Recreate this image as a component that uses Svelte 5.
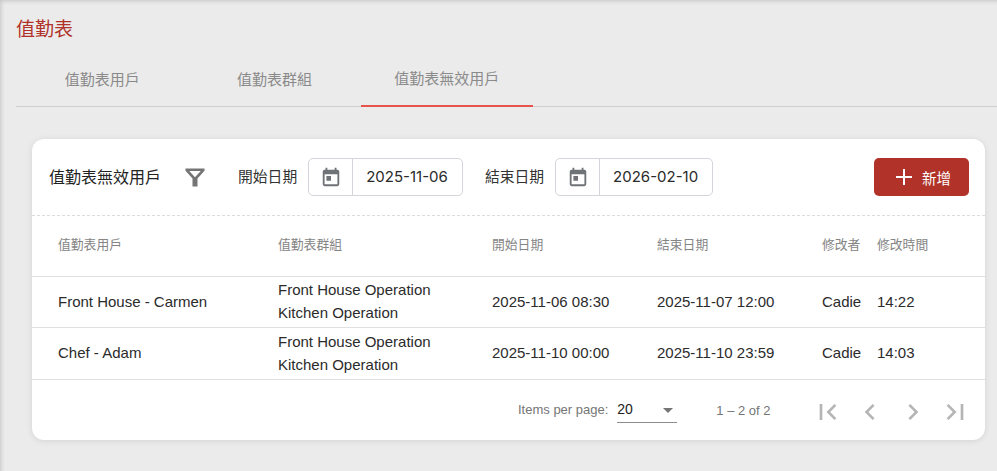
<script lang="ts">
  // Attendance sheet page: tabs plus the "invalid users" table card.
  const tabs = ['值勤表用戶', '值勤表群組', '值勤表無效用戶'];
  const activeTab = 2;

  const columns = ['值勤表用戶', '值勤表群組', '開始日期', '結束日期', '修改者', '修改時間'];
  const rows = [
    { user: 'Front House - Carmen', groups: ['Front House Operation', 'Kitchen Operation'], start: '2025-11-06 08:30', end: '2025-11-07 12:00', by: 'Cadie', time: '14:22' },
    { user: 'Chef - Adam', groups: ['Front House Operation', 'Kitchen Operation'], start: '2025-11-10 00:00', end: '2025-11-10 23:59', by: 'Cadie', time: '14:03' }
  ];

  const dates = [
    { label: '開始日期', value: '2025-11-06' },
    { label: '結束日期', value: '2026-02-10' }
  ];

  const pagers = [
    'M6.5 6v12h2V6zM19 7.4 17.6 6l-6 6 6 6 1.4-1.4L14.4 12z',
    'M15.4 7.4 14 6l-6 6 6 6 1.4-1.4L10.8 12z',
    'M8.6 7.4 10 6l6 6-6 6-1.4-1.4 4.6-4.6z',
    'M15.5 6v12h2V6zM5 7.4 6.4 6l6 6-6 6L5 16.6 9.6 12z'
  ];
</script>

<div class="page">
  <h1 class="title">值勤表</h1>

  <nav class="tabs">
    {#each tabs as tab, i}
      <div class="tab" class:active={i === activeTab}>{tab}</div>
    {/each}
  </nav>

  <section class="card">
    <header class="toolbar">
      <span class="card-title">值勤表無效用戶</span>
      <svg class="filter" viewBox="0 0 24 24" width="24" height="24">
        <path d="M2.500 3.500h19v2.300l-7 7.700v8h-5v-8l-7-7.700zM6.300 6l5.700 6.300L17.700 6z" fill-rule="evenodd" />
      </svg>
      {#each dates as date}
        <div class="date-field">
          <span class="date-label">{date.label}</span>
          <div class="date-box">
            <span class="date-icon">
              <svg viewBox="0 0 24 24" width="24" height="24">
                <path d="M19 4h-1V2h-2v2H8V2H6v2H5a2 2 0 0 0-2 2v14a2 2 0 0 0 2 2h14a2 2 0 0 0 2-2V6a2 2 0 0 0-2-2zm0 16H5V9h14zM7 11h5v5H7z" />
              </svg>
            </span>
            <span class="date-value">{date.value}</span>
          </div>
        </div>
      {/each}
      <button class="add">
        <svg viewBox="0 0 24 24" width="24" height="24"><path d="M11 4h2v7h7v2h-7v7h-2v-7H4v-2h7z" /></svg>
        新增
      </button>
    </header>

    <table>
      <colgroup>
        <col class="c1" /><col class="c2" /><col class="c3" /><col class="c4" /><col class="c5" /><col />
      </colgroup>
      <thead>
        <tr>
          {#each columns as col}<th>{col}</th>{/each}
        </tr>
      </thead>
      <tbody>
        {#each rows as row}
          <tr>
            <td>{row.user}</td>
            <td>
              {#each row.groups as group}<div class="group">{group}</div>{/each}
            </td>
            <td>{row.start}</td>
            <td>{row.end}</td>
            <td>{row.by}</td>
            <td>{row.time}</td>
          </tr>
        {/each}
      </tbody>
    </table>

    <footer class="paginator">
      <span class="per-page">Items per page:</span>
      <div class="select">
        <span>20</span>
        <i class="caret"></i>
      </div>
      <span class="range">1 – 2 of 2</span>
      <div class="pagers">
        {#each pagers as d}
          <svg viewBox="0 0 24 24" width="32" height="32"><path d={d} /></svg>
        {/each}
      </div>
    </footer>
  </section>
</div>

<style>
  :global(body) {
    margin: 0;
    background: #ebebeb;
  }

  .page {
    height: 471px;
    box-sizing: border-box;
    padding: 17px 0 0 16px;
    overflow: hidden;
    background: #ebebeb;
    box-shadow: inset 3px 3px 4px -2px rgba(0, 0, 0, 0.16);
    font-family: Roboto, 'Noto Sans CJK TC', sans-serif;
  }

  .title {
    margin: 0;
    height: 26px;
    font-size: 19px;
    line-height: 26px;
    font-weight: 400;
    color: #b03229;
  }

  .tabs {
    display: flex;
    height: 48px;
    margin-top: 15px;
    border-bottom: 1px solid #cfcfcf;
  }

  .tab {
    width: 172.3px;
    display: flex;
    align-items: center;
    justify-content: center;
    box-sizing: border-box;
    padding-bottom: 8px;
    font-size: 15px;
    color: #8a8a8a;
  }

  .tab.active {
    border-bottom: 2px solid #e5534b;
    height: 49px;
  }

  .card {
    width: 953px;
    height: 301px;
    margin: 32px 0 0 16px;
    background: #fff;
    border-radius: 12px;
    box-shadow: 0 1px 6px rgba(0, 0, 0, 0.1);
    overflow: hidden;
  }

  .toolbar {
    display: flex;
    align-items: center;
    height: 77px;
    box-sizing: border-box;
    padding: 0 16px 0 17px;
    border-bottom: 1px dashed #dcdcdc;
  }

  .card-title {
    padding-bottom: 2px;
    font-size: 16px;
    color: #222;
  }

  .filter {
    margin: 0 31px 0 22px;
    fill: #757575;
  }

  .date-field {
    display: flex;
    align-items: center;
    gap: 11px;
    margin-right: 22px;
  }

  .date-label {
    padding-bottom: 3px;
    font-size: 14.800px;
    color: #333;
  }

  .date-box {
    display: flex;
    height: 38px;
    box-sizing: border-box;
    border: 1px solid #d3d5da;
    border-radius: 5px;
  }

  .date-icon {
    width: 43px;
    display: flex;
    align-items: center;
    justify-content: center;
    border-right: 1px solid #d3d5da;
  }

  .date-icon svg {
    width: 22px;
    height: 22px;
    fill: #6f7276;
  }

  .date-value {
    padding: 0 14px 0 13px;
    line-height: 36px;
    font-family: Inter, sans-serif;
    font-size: 15px;
    color: #2a2a2a;
  }

  .add {
    display: flex;
    align-items: center;
    justify-content: center;
    gap: 6px;
    width: 95px;
    height: 38px;
    margin-left: auto;
    border: 0;
    border-radius: 5px;
    background: #b03229;
    color: #fff;
    font-family: inherit;
    font-size: 14.5px;
  }

  .add svg {
    fill: #fff;
  }

  table {
    width: 100%;
    table-layout: fixed;
    border-collapse: collapse;
  }

  .c1 { width: 246px; }
  .c2 { width: 214px; }
  .c3 { width: 165px; }
  .c4 { width: 165px; }
  .c5 { width: 55px; }

  th, td {
    box-sizing: border-box;
    padding: 0;
    text-align: left;
    border-bottom: 1px solid #e0e0e0;
    white-space: nowrap;
  }

  th:first-child, td:first-child {
    padding-left: 26px;
  }

  th {
    height: 60px;
    padding-bottom: 5px;
    font-size: 12.800px;
    font-weight: 400;
    color: #858585;
  }

  td {
    height: 51px;
    padding-bottom: 1px;
    font-family: 'Liberation Sans', Arial, sans-serif;
    font-size: 15px;
    color: #2b2b2b;
  }

  tbody tr:last-child td {
    height: 52px;
  }

  .group {
    line-height: 23px;
  }

  .paginator {
    display: flex;
    align-items: center;
    height: 60px;
    padding-left: 486px;
    font-family: 'Liberation Sans', Arial, sans-serif;
    font-size: 13px;
    color: #757575;
  }

  .select {
    display: flex;
    align-items: center;
    justify-content: space-between;
    box-sizing: border-box;
    width: 60px;
    height: 26px;
    margin-left: 9px;
    padding: 0 3px 0 0;
    border-bottom: 1px solid #8c8c8c;
    font-size: 14px;
    color: #222;
  }

  .caret {
    width: 0;
    height: 0;
    margin-top: 2px;
    border: 5px solid transparent;
    border-top-color: #757575;
    border-bottom-width: 0;
    margin-right: 1px;
  }

  .range {
    margin: 2px 0 0 39px;
  }

  .pagers {
    display: flex;
    gap: 11px;
    margin: 4px 0 0 40px;
  }

  .pagers svg {
    fill: #b5b5b5;
  }
</style>
